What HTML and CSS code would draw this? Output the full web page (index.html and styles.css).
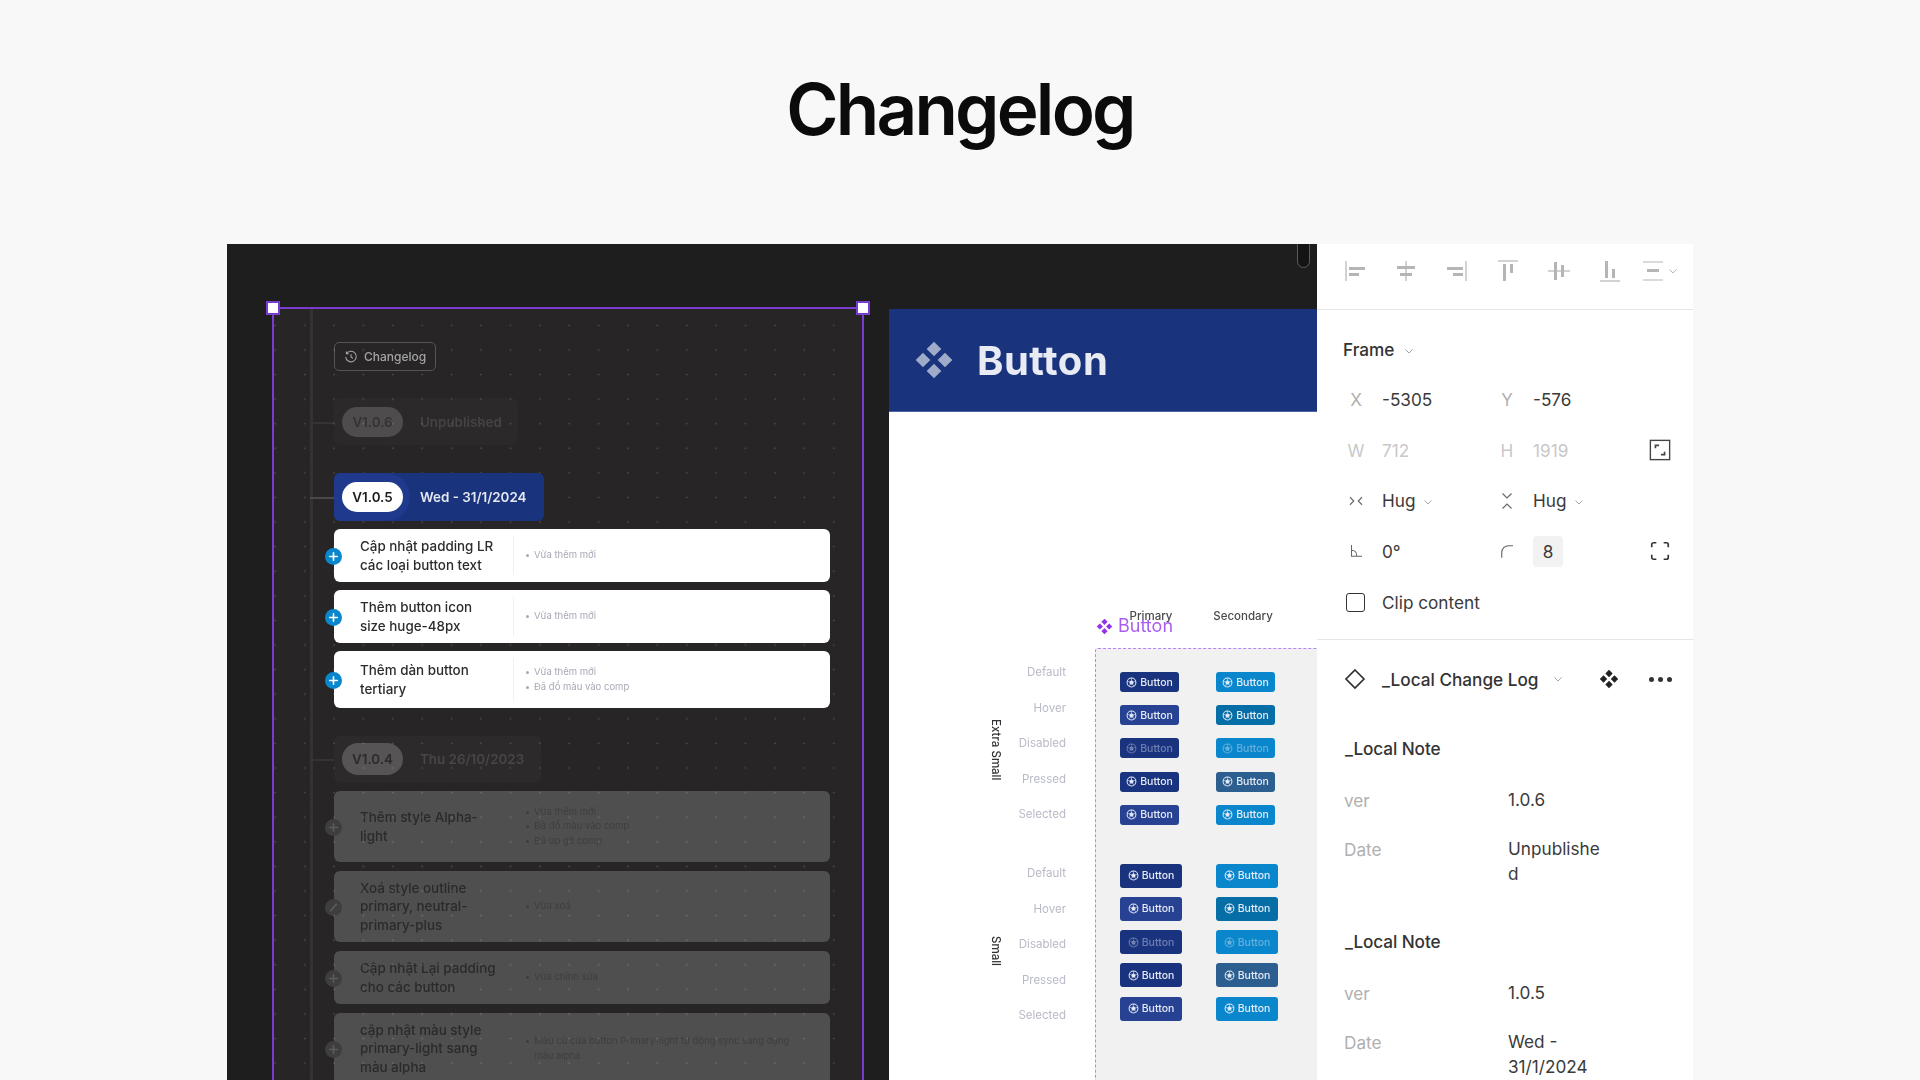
FILE: index.html
```html
<!DOCTYPE html>
<html lang="vi">
<head>
  <meta charset="UTF-8" />
  <meta name="viewport" content="width=device-width, initial-scale=1" />
  <title>Changelog</title>
  <link rel="stylesheet" href="styles.css">
</head>
<body>
  <svg class="icon-defs" width="0" height="0" aria-hidden="true">
    <symbol id="i-comp" viewBox="0 0 24 24">
      <path d="M12 1l4.4 4.4L12 9.8 7.600 5.400zM12 14.200l4.400 4.400L12 23l-4.400-4.400zM5.400 7.600L9.800 12l-4.400 4.400L1 12zM18.600 7.600L23 12l-4.400 4.400L14.200 12z"/>
    </symbol>
    <symbol id="i-ball" viewBox="0 0 12 12">
      <circle cx="6" cy="6" r="4.800" fill="none" stroke="currentColor" stroke-width="1.100"/>
      <path d="M6 3.800l2.100 1.500-.8 2.500H4.700l-.8-2.500zM6 1.200v2.600M1.400 4.600l2.500.7M10.600 4.600l-2.500.7M3.200 10l1.500-2.200M8.800 10L7.300 7.800" fill="currentColor" stroke="currentColor" stroke-width=".6"/>
    </symbol>
    <symbol id="i-plus" viewBox="0 0 12 12">
      <path d="M6 2.500v7M2.500 6h7" fill="none" stroke="currentColor" stroke-width="1.500" stroke-linecap="round"/>
    </symbol>
    <symbol id="i-chev" viewBox="0 0 12 12">
      <path d="M2.500 4.500L6 8l3.500-3.500" fill="none" stroke="currentColor" stroke-width="1"/>
    </symbol>
  </svg>

  <h1 class="page-title">Changelog</h1>

  <main class="window">
    <section class="canvas">
      <div class="scroll-thumb"></div>

      <div class="log-frame">
        <div class="frame-dots"></div>
        <div class="timeline-line"></div>
        <span class="handle handle-left"></span>
        <span class="handle handle-right"></span>

        <div class="log-tag">
          <svg class="log-tag-icon" viewBox="0 0 14 14"><path d="M2.600 3.600A5.300 5.300 0 1 1 1.700 7M2.400 1.500v2.300h2.300M7 4.200V7l1.800 1.200" fill="none" stroke="currentColor" stroke-width="1.100"/></svg>
          Changelog
        </div>

        <div class="ver-head ver-faint">
          <span class="ver-pill">V1.0.6</span>
          <span class="ver-date">Unpublished</span>
        </div>

        <div class="ver-group is-current">
          <div class="ver-head ver-active">
            <span class="ver-pill">V1.0.5</span>
            <span class="ver-date">Wed - 31/1/2024</span>
          </div>
          <div class="log-card card-53">
            <span class="mark"><svg><use href="#i-plus"/></svg></span>
            <div class="card-title">Cập nhật padding LR<br>các loại button text</div>
            <ul class="card-notes"><li>Vừa thêm mới</li></ul>
          </div>
          <div class="log-card card-53">
            <span class="mark"><svg><use href="#i-plus"/></svg></span>
            <div class="card-title">Thêm button icon<br>size huge-48px</div>
            <ul class="card-notes"><li>Vừa thêm mới</li></ul>
          </div>
          <div class="log-card card-57">
            <span class="mark"><svg><use href="#i-plus"/></svg></span>
            <div class="card-title">Thêm dàn button<br>tertiary</div>
            <ul class="card-notes"><li>Vừa thêm mới</li><li>Đã đổ màu vào comp</li></ul>
          </div>
        </div>

        <div class="ver-group is-past">
          <div class="ver-head ver-dim">
            <span class="ver-pill">V1.0.4</span>
            <span class="ver-date">Thu 26/10/2023</span>
          </div>
          <div class="log-card card-71">
            <span class="mark"><svg><use href="#i-plus"/></svg></span>
            <div class="card-title">Thêm style Alpha-<br>light</div>
            <ul class="card-notes"><li>Vừa thêm mới</li><li>Đã đổ màu vào comp</li><li>Đã up git comp</li></ul>
          </div>
          <div class="log-card card-71">
            <span class="mark mark-slash"><svg viewBox="0 0 12 12"><path d="M3 9.500L9 2.500" fill="none" stroke="currentColor" stroke-width="1.600"/></svg></span>
            <div class="card-title">Xoá style outline<br>primary, neutral-<br>primary-plus</div>
            <ul class="card-notes"><li>Vừa xoá</li></ul>
          </div>
          <div class="log-card card-53">
            <span class="mark"><svg><use href="#i-plus"/></svg></span>
            <div class="card-title">Cập nhật Lại padding<br>cho các button</div>
            <ul class="card-notes"><li>Vừa chỉnh sửa</li></ul>
          </div>
          <div class="log-card card-71">
            <span class="mark"><svg><use href="#i-plus"/></svg></span>
            <div class="card-title">cập nhật màu style<br>primary-light sang<br>màu alpha</div>
            <ul class="card-notes"><li>Màu cũ của button Primary-light tự động sync sang dạng màu alpha</li></ul>
          </div>
        </div>
      </div>

      <div class="sheet">
        <header class="sheet-head">
          <svg class="sheet-head-icon"><use href="#i-comp"/></svg>
          <span>Button</span>
        </header>
        <div class="sheet-body">
          <div class="sheet-label">
            <svg><use href="#i-comp"/></svg>
            <span>Button</span>
          </div>
          <div class="col-heads">
            <span>Primary</span>
            <span>Secondary</span>
          </div>
          <div class="matrix">
            <div class="matrix-side">
              <div class="size-group">
                <span class="size-name">Extra Small</span>
                <ul class="state-list"><li>Default</li><li>Hover</li><li>Disabled</li><li>Pressed</li><li>Selected</li></ul>
              </div>
              <div class="size-group">
                <span class="size-name">Small</span>
                <ul class="state-list"><li>Default</li><li>Hover</li><li>Disabled</li><li>Pressed</li><li>Selected</li></ul>
              </div>
            </div>
            <div class="matrix-main">
              <div class="btn-grid btn-grid-xs">
                <div class="demo-btn pri"><svg><use href="#i-ball"/></svg>Button</div>
                <div class="demo-btn sec"><svg><use href="#i-ball"/></svg>Button</div>
                <div class="demo-btn pri-hover"><svg><use href="#i-ball"/></svg>Button</div>
                <div class="demo-btn sec-hover"><svg><use href="#i-ball"/></svg>Button</div>
                <div class="demo-btn pri off"><svg><use href="#i-ball"/></svg>Button</div>
                <div class="demo-btn sec off"><svg><use href="#i-ball"/></svg>Button</div>
                <div class="demo-btn pri"><svg><use href="#i-ball"/></svg>Button</div>
                <div class="demo-btn sec-press"><svg><use href="#i-ball"/></svg>Button</div>
                <div class="demo-btn pri-hover"><svg><use href="#i-ball"/></svg>Button</div>
                <div class="demo-btn sec"><svg><use href="#i-ball"/></svg>Button</div>
              </div>
              <div class="btn-grid btn-grid-sm">
                <div class="demo-btn pri"><svg><use href="#i-ball"/></svg>Button</div>
                <div class="demo-btn sec"><svg><use href="#i-ball"/></svg>Button</div>
                <div class="demo-btn pri-hover"><svg><use href="#i-ball"/></svg>Button</div>
                <div class="demo-btn sec-hover"><svg><use href="#i-ball"/></svg>Button</div>
                <div class="demo-btn pri off"><svg><use href="#i-ball"/></svg>Button</div>
                <div class="demo-btn sec off"><svg><use href="#i-ball"/></svg>Button</div>
                <div class="demo-btn pri"><svg><use href="#i-ball"/></svg>Button</div>
                <div class="demo-btn sec-press"><svg><use href="#i-ball"/></svg>Button</div>
                <div class="demo-btn pri-hover"><svg><use href="#i-ball"/></svg>Button</div>
                <div class="demo-btn sec"><svg><use href="#i-ball"/></svg>Button</div>
              </div>
            </div>
          </div>
        </div>
      </div>
    </section>

    <aside class="panel">
      <div class="align-bar">
        <svg viewBox="0 0 24 24"><path d="M3 2v20" class="thin"/><path d="M6 8h16v3H6zM6 14h10v3H6z"/></svg>
        <svg viewBox="0 0 24 24"><path d="M12 2v20" class="thin"/><path d="M3 7h18v3H3zM6 14h12v3H6z"/></svg>
        <svg viewBox="0 0 24 24"><path d="M21 2v20" class="thin"/><path d="M2 8h16v3H2zM8 14h10v3H8z"/></svg>
        <svg viewBox="0 0 24 24"><path d="M2 2h20" class="thin"/><path d="M7 5h3v17H7zM14 5h3v9h-3z"/></svg>
        <svg viewBox="0 0 24 24"><path d="M1 12h22" class="thin"/><path d="M7 3h3v18H7zM14 6h3v12h-3z"/></svg>
        <svg viewBox="0 0 24 24"><path d="M2 22h20" class="thin"/><path d="M7 2h3v17H7zM14 10h3v9h-3z"/></svg>
        <svg class="align-last" viewBox="0 0 24 24"><path d="M2 3h20M2 21h20" class="thin"/><path d="M6 10h12v3H6z"/></svg>
        <svg class="align-chev"><use href="#i-chev"/></svg>
      </div>

      <section class="frame-section">
        <div class="section-title">Frame <svg class="chev"><use href="#i-chev"/></svg></div>
        <div class="prop-grid">
          <span class="p-label">X</span><span class="p-val">-5305</span>
          <span class="p-label">Y</span><span class="p-val">-576</span>
          <span></span>

          <span class="p-label faint">W</span><span class="p-val faint">712</span>
          <span class="p-label faint">H</span><span class="p-val faint">1919</span>
          <svg class="p-icon" viewBox="0 0 24 24"><rect x="1.500" y="1.500" width="21" height="21" fill="none" stroke="#444" stroke-width="1.500"/><path d="M7 10V7h4M17 14v3h-4" fill="none" stroke="#444" stroke-width="1.800"/></svg>

          <svg class="p-glyph" viewBox="0 0 24 24"><path d="M4 7l5 5-5 5M20 7l-5 5 5 5" fill="none" stroke="#666" stroke-width="1.500"/></svg>
          <span class="p-val">Hug <svg class="chev"><use href="#i-chev"/></svg></span>
          <svg class="p-glyph" viewBox="0 0 24 24"><path d="M6 2l6 6 6-6M6 22l6-6 6 6" fill="none" stroke="#666" stroke-width="1.500"/></svg>
          <span class="p-val">Hug <svg class="chev"><use href="#i-chev"/></svg></span>
          <span></span>

          <svg class="p-glyph" viewBox="0 0 24 24"><path d="M6 4v15h14M6 11c4 0 7 3 7 8" fill="none" stroke="#666" stroke-width="1.400"/></svg>
          <span class="p-val">0°</span>
          <svg class="p-glyph" viewBox="0 0 24 24"><path d="M5 21v-7a9 9 0 0 1 9-9h6" fill="none" stroke="#666" stroke-width="1.500"/></svg>
          <span class="p-val"><span class="radius-box">8</span></span>
          <svg class="p-icon" viewBox="0 0 24 24"><path d="M3 8V5a2 2 0 0 1 2-2h3M16 3h3a2 2 0 0 1 2 2v3M21 16v3a2 2 0 0 1-2 2h-3M8 21H5a2 2 0 0 1-2-2v-3" fill="none" stroke="#333" stroke-width="1.800"/></svg>

          <span class="p-check"></span>
          <span class="p-val p-wide">Clip content</span>
        </div>
      </section>

      <section class="instance-section">
        <div class="instance-head">
          <svg class="instance-diamond" viewBox="0 0 24 24"><path d="M12 3l9 9-9 9-9-9z" fill="none" stroke="#333" stroke-width="1.700"/></svg>
          <span class="instance-name">_Local Change Log</span>
          <svg class="chev instance-chev"><use href="#i-chev"/></svg>
          <svg class="instance-comp"><use href="#i-comp"/></svg>
          <span class="instance-more"><i></i><i></i><i></i></span>
        </div>

        <div class="note">
          <div class="note-title">_Local Note</div>
          <dl class="note-props">
            <dt>ver</dt><dd>1.0.6</dd>
            <dt>Date</dt><dd>Unpublished</dd>
          </dl>
        </div>
        <div class="note">
          <div class="note-title">_Local Note</div>
          <dl class="note-props">
            <dt>ver</dt><dd>1.0.5</dd>
            <dt>Date</dt><dd>Wed - 31/1/2024</dd>
          </dl>
        </div>
      </section>
    </aside>
  </main>
</body>
</html>
```

FILE: styles.css
```css
* {
  box-sizing: border-box;
}

html, body {
  height: 1080px;
  overflow: hidden;
}

body {
  margin: 0;
  background: #f8f8f8;
  font-family: Inter, 'Liberation Sans', sans-serif;
  color: #333;
}

ul, dl, dd {
  margin: 0;
  padding: 0;
  list-style: none;
}

.icon-defs {
  position: absolute;
}

.page-title {
  margin: 0;
  padding: 64px 0 90px;
  font-size: 71px;
  line-height: 90px;
  font-weight: 600;
  letter-spacing: -2.8px;
  text-align: center;
  color: #0b0b0b;
}

.window {
  display: flex;
  width: 1466px;
  height: 836px;
  margin-left: 227px;
  overflow: hidden;
}

/* canvas */
.canvas {
  position: relative;
  flex: 0 0 1090px;
  background: #1e1e1e;
  overflow: hidden;
  filter: blur(0.5px);
}

.scroll-thumb {
  position: absolute;
  top: -6px;
  left: 1070px;
  width: 13px;
  height: 30px;
  border: 1.5px solid #5c5c5c;
  border-radius: 7px;
  background: #141414;
}

.log-frame {
  position: absolute;
  left: 45px;
  top: 63px;
  width: 592px;
  height: 900px;
  padding: 33px 0 0 60px;
  border: 2px solid #7a3bd1;
  background: #272526;
}

.frame-dots {
  position: absolute;
  inset: 0;
  z-index: 1;
  background-image: radial-gradient(circle, rgba(255, 255, 255, 0.15) 0.8px, transparent 1.2px);
  background-size: 29.4px 24.6px;
  background-position: 16px 4px;
  pointer-events: none;
}

.timeline-line {
  position: absolute;
  left: 36px;
  top: 0;
  bottom: 0;
  width: 3px;
  background: #343233;
}

.handle {
  position: absolute;
  top: -8px;
  z-index: 3;
  width: 14px;
  height: 14px;
  background: #fff;
  border: 2px solid #7a3bd1;
}

.handle-left {
  left: -8px;
}

.handle-right {
  right: -8px;
}

.log-tag {
  display: inline-flex;
  align-items: center;
  gap: 6px;
  height: 29px;
  padding: 0 9px;
  border: 1px solid #565455;
  border-radius: 5px;
  font-size: 12px;
  font-weight: 500;
  color: #a5a4a5;
}

.log-tag-icon {
  width: 14px;
  height: 14px;
}

.ver-head {
  position: relative;
  display: flex;
  align-items: center;
  gap: 17px;
  height: 47px;
  padding-left: 8px;
  border-radius: 6px;
  font-size: 13.4px;
  font-weight: 600;
}

.ver-head::before {
  content: "";
  position: absolute;
  left: -24px;
  top: 50%;
  width: 24px;
  height: 2px;
  background: #353334;
}

.ver-pill {
  display: flex;
  align-items: center;
  justify-content: center;
  width: 61px;
  height: 30px;
  border-radius: 15px;
}

.ver-faint {
  width: 184px;
  margin-top: 27px;
  background: #2b292a;
}

.ver-faint .ver-pill {
  background: #4e4c4d;
  color: #343334;
}

.ver-faint .ver-date {
  color: #454344;
}

.ver-group {
  position: relative;
  display: flex;
  flex-direction: column;
}

.is-current {
  z-index: 2;
  margin-top: 28px;
  gap: 8px;
}

.ver-active {
  width: 210px;
  height: 48px;
  background: #19337c;
  color: #e4e7f0;
}

.ver-active::after {
  content: "";
  position: absolute;
  left: 0;
  top: 0;
  width: 76px;
  height: 48px;
  background: #1f3a8c;
  border-radius: 6px 24px 24px 6px;
}

.ver-active::before {
  background: #4a4849;
}

.ver-active .ver-pill,
.ver-active .ver-date {
  position: relative;
  z-index: 1;
}

.ver-active .ver-pill {
  background: #fff;
  color: #1b1b1b;
}

.is-past {
  margin-top: 28px;
  gap: 9px;
}

.ver-dim {
  width: 207px;
  height: 46px;
  background: #2c2a2b;
}

.ver-dim .ver-pill {
  height: 32px;
  border-radius: 16px;
  background: #565455;
  color: #2c2b2c;
}

.ver-dim .ver-date {
  color: #484647;
}

.log-card {
  position: relative;
  display: flex;
  align-items: center;
  width: 496px;
  border-radius: 6px;
  background: #fff;
}

.card-53 { height: 53px; }
.card-57 { height: 57px; }
.card-71 { height: 71px; }

.card-title {
  flex: 0 0 180px;
  align-self: stretch;
  display: flex;
  flex-direction: column;
  justify-content: center;
  margin: 7px 0;
  padding-left: 26px;
  border-right: 1px solid #f0f0f0;
  font-size: 13.4px;
  line-height: 18.2px;
  font-weight: 500;
  color: #2c2c2c;
}

.card-notes {
  padding-left: 12px;
  padding-right: 24px;
  font-size: 9.5px;
  line-height: 14.2px;
  color: #a7a9b5;
}

.card-notes li {
  position: relative;
  padding-left: 8px;
}

.card-notes li::before {
  content: "";
  position: absolute;
  left: 0;
  top: 6px;
  width: 3px;
  height: 3px;
  border-radius: 50%;
  background: #a7a9b5;
}

.mark {
  position: absolute;
  left: -9px;
  top: 50%;
  display: flex;
  width: 17px;
  height: 17px;
  margin-top: -8px;
  border-radius: 50%;
  background: #0a87cc;
  color: #fff;
}

.mark svg {
  width: 17px;
  height: 17px;
  padding: 2px;
}

.is-past .log-card {
  background: #504f50;
}

.is-past .card-title {
  color: #2a2a2a;
  border-color: #504f50;
}

.is-past .card-notes {
  color: #3f3e3f;
}

.is-past .card-notes li::before {
  background: #3f3e3f;
}

.is-past .mark {
  background: #3f3e3f;
  color: #5c5b5c;
}

/* button sheet */
.sheet {
  position: absolute;
  left: 662px;
  top: 65px;
  right: 0;
  bottom: 0;
  background: #fff;
}

.sheet-head {
  display: flex;
  align-items: center;
  gap: 23px;
  height: 103px;
  padding-left: 25px;
  background: #19337c;
  border-bottom: 1px solid #4d64a3;
  font-size: 40px;
  font-weight: 700;
  letter-spacing: 0.5px;
  color: #e8ebf4;
}

.sheet-head-icon {
  width: 40px;
  height: 40px;
  fill: #9eabc9;
}

.sheet-body {
  position: relative;
}

.sheet-label {
  position: absolute;
  left: 207px;
  top: 202px;
  display: flex;
  align-items: center;
  gap: 5px;
  font-size: 18px;
  line-height: 24px;
  color: #a85ff0;
}

.sheet-label svg {
  width: 17px;
  height: 17px;
  fill: #9333ea;
}

.col-heads {
  display: flex;
  height: 236px;
  padding: 197px 0 0 216px;
  font-size: 11.5px;
  line-height: 14px;
  font-weight: 500;
  color: #4a4a4e;
}

.col-heads span {
  position: relative;
  flex: 0 0 92px;
  text-align: center;
}

.matrix {
  display: flex;
}

.matrix-side {
  flex: 0 0 206px;
  display: flex;
  flex-direction: column;
  align-items: flex-end;
  gap: 23px;
  padding: 7px 29px 0 0;
}

.size-group {
  display: flex;
  align-items: center;
  gap: 13px;
}

.size-name {
  padding-top: 12px;
  writing-mode: vertical-rl;
  font-size: 11.5px;
  line-height: 14px;
  font-weight: 500;
  color: #333337;
}

.state-list {
  width: 50px;
  font-size: 11.5px;
  line-height: 35.6px;
  text-align: right;
  color: #b8bac6;
  white-space: nowrap;
}

.matrix-main {
  flex: 1;
  height: 460px;
  padding: 23px 0 0 24px;
  background: #f1f1f1;
  border-left: 1.5px dashed #b785f5;
  border-top: 1.5px dashed #b785f5;
  border-top-left-radius: 3px;
}

.btn-grid {
  display: grid;
  grid-template-columns: 96px auto;
  justify-content: start;
}

.btn-grid-xs {
  row-gap: 13.2px;
}

.btn-grid-xs .demo-btn {
  width: 59px;
  height: 20px;
}

.btn-grid-sm {
  row-gap: 9.2px;
  margin-top: 39px;
}

.btn-grid-sm .demo-btn {
  width: 62px;
  height: 24px;
}

.demo-btn {
  display: flex;
  align-items: center;
  justify-content: center;
  gap: 3px;
  border-radius: 3px;
  font-size: 10.5px;
  font-weight: 500;
  color: #e6eaf5;
}

.demo-btn svg {
  width: 11px;
  height: 11px;
  flex: none;
}

.pri { background: #1a337e; }
.pri-hover { background: #274293; }
.sec { background: #0a87cc; }
.sec-hover { background: #056ea6; }
.sec-press { background: #2c5f90; }

.off {
  color: rgba(230, 234, 245, 0.4);
}

/* right panel */
.panel {
  flex: 0 0 376px;
  background: #fff;
  font-size: 17.2px;
  line-height: 25px;
}

.align-bar {
  display: flex;
  align-items: center;
  gap: 27px;
  height: 66px;
  padding: 0 0 11px 26px;
  border-bottom: 1.5px solid #e6e6e6;
}

.align-bar svg {
  flex: none;
  width: 24px;
  height: 24px;
  fill: #b5b5b5;
}

.align-bar .thin {
  fill: none;
  stroke: #b5b5b5;
  stroke-width: 1.200;
}

.align-bar .align-last {
  margin-left: -8px;
}

.align-bar .align-chev {
  width: 12px;
  height: 12px;
  margin-left: -25px;
  color: #b5b5b5;
}

.chev {
  display: inline-block;
  width: 12px;
  height: 12px;
  margin-left: 4px;
  vertical-align: -1px;
  color: #a5a5a5;
}

.frame-section {
  height: 330px;
  padding: 27px 0 0 26px;
  border-bottom: 1.5px solid #e6e6e6;
}

.section-title {
  height: 26px;
  font-weight: 500;
  color: #333;
}

.prop-grid {
  display: grid;
  grid-template-columns: 39px 112px 39px 111px 32px;
  grid-auto-rows: 50.7px;
  align-items: center;
  margin-top: 11px;
}

.p-label {
  width: 26px;
  text-align: center;
  color: #b0b0b0;
}

.p-val {
  color: #3a3a3a;
}

.p-val .chev {
  margin-left: 2px;
}

.faint {
  color: #c8c8c8;
}

.p-glyph {
  width: 18px;
  height: 18px;
  margin-left: 4px;
}

.p-icon {
  width: 22px;
  height: 22px;
  margin-left: 5px;
}

.radius-box {
  display: inline-block;
  width: 30px;
  height: 31px;
  line-height: 31px;
  border-radius: 4px;
  background: #f2f2f2;
  text-align: center;
}

.p-check {
  width: 19px;
  height: 19px;
  margin-left: 3px;
  border: 1.5px solid #333;
  border-radius: 3px;
}

.p-wide {
  grid-column: span 4;
}

.instance-section {
  padding: 24px 0 0 26px;
}

.instance-head {
  display: flex;
  align-items: center;
  height: 30px;
}

.instance-diamond {
  flex: none;
  width: 24px;
  height: 24px;
}

.instance-name {
  flex: 0 0 157px;
  margin-left: 15px;
  font-weight: 500;
  white-space: nowrap;
}

.instance-chev {
  margin-left: 13px;
}

.instance-comp {
  width: 20px;
  height: 20px;
  margin-left: 35px;
  fill: #222;
}

.instance-more {
  display: flex;
  gap: 4px;
  margin-left: 30px;
}

.instance-more i {
  width: 5px;
  height: 5px;
  border-radius: 50%;
  background: #333;
}

.note {
  margin-top: 43px;
  padding-left: 2px;
}

.note + .note {
  margin-top: 44px;
}

.note-title {
  height: 24px;
  line-height: 24px;
  font-weight: 500;
  letter-spacing: -0.1px;
}

.note-props {
  display: grid;
  grid-template-columns: 163px 96px;
  row-gap: 23px;
  margin-top: 26px;
}

.note-props dt {
  margin-left: -1px;
  padding-top: 1px;
  color: #b0b0b0;
}

.note-props dd {
  color: #3a3a3a;
  overflow-wrap: anywhere;
}
```
